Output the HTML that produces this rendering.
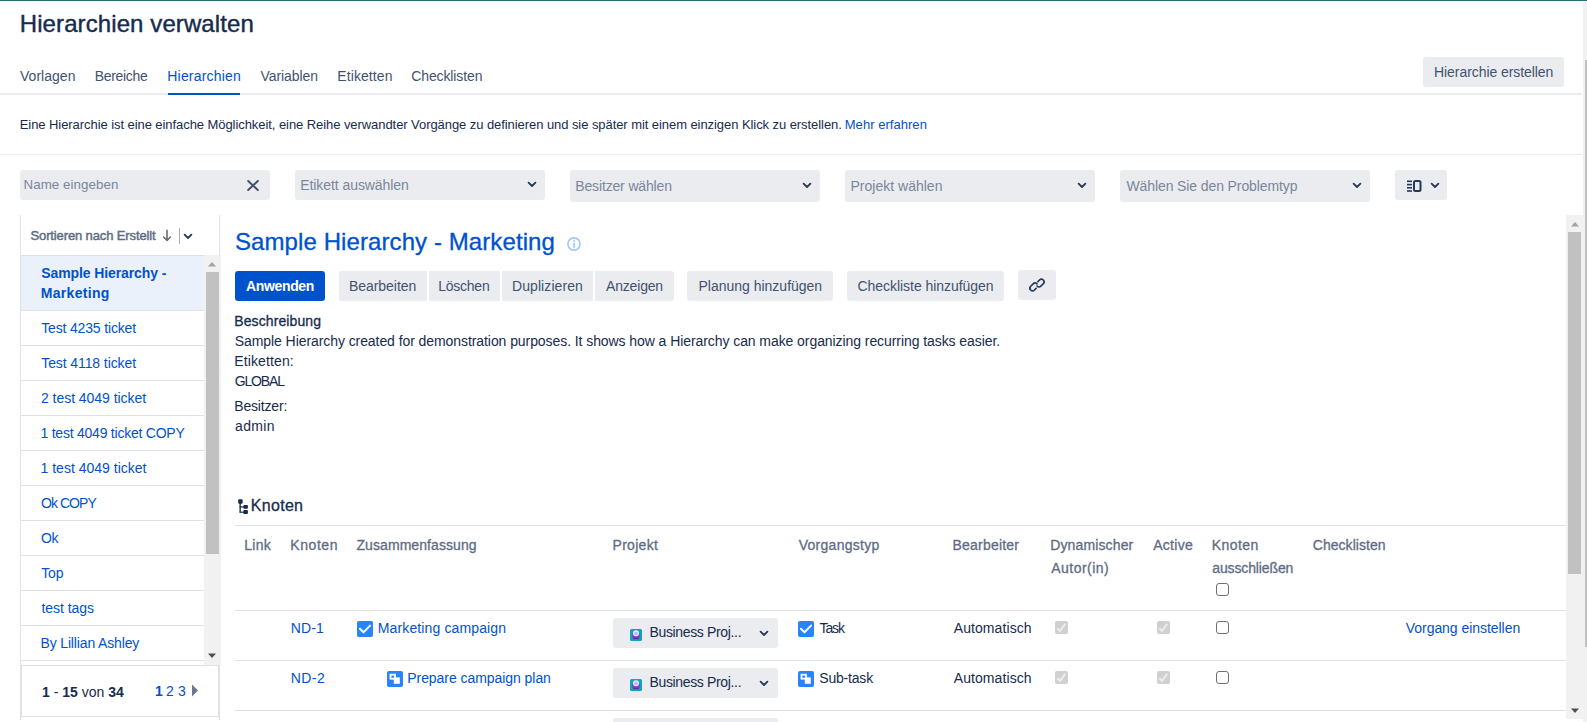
<!DOCTYPE html>
<html><head><meta charset="utf-8"><style>
html,body{margin:0;padding:0;background:#fff;}
body{width:1587px;height:722px;position:relative;overflow:hidden;font-family:"Liberation Sans",sans-serif;}
.t{position:absolute;white-space:nowrap;}
.r{position:absolute;}
svg{display:block;}
</style></head><body>
<div class="r" style="left:0px;top:0px;width:1587px;height:1px;background:#2c6e70;"></div>
<div class="t" id="f1" style="left:19.75px;top:10px;font-size:24px;line-height:27px;color:#172b4d;-webkit-text-stroke:0.4px #172b4d;letter-spacing:0.096px;">Hierarchien verwalten</div>
<div class="t" id="f2" style="left:20.0px;top:68px;font-size:14px;line-height:16px;color:#42526e;letter-spacing:0.027px;">Vorlagen</div>
<div class="t" id="f3" style="left:94.75px;top:68px;font-size:14px;line-height:16px;color:#42526e;letter-spacing:-0.314px;">Bereiche</div>
<div class="t" id="f4" style="left:167.25px;top:68px;font-size:14px;line-height:16px;color:#0052cc;letter-spacing:0.206px;">Hierarchien</div>
<div class="t" id="f5" style="left:260.5px;top:68px;font-size:14px;line-height:16px;color:#42526e;letter-spacing:-0.082px;">Variablen</div>
<div class="t" id="f6" style="left:337.25px;top:68px;font-size:14px;line-height:16px;color:#42526e;letter-spacing:0.097px;">Etiketten</div>
<div class="t" id="f7" style="left:411.25px;top:68px;font-size:14px;line-height:16px;color:#42526e;letter-spacing:-0.115px;">Checklisten</div>
<div class="r" style="left:0px;top:93px;width:1582px;height:2px;background:#ebecf0;"></div>
<div class="r" style="left:168px;top:93px;width:72px;height:2px;background:#0052cc;"></div>
<div class="r" style="left:1423px;top:57px;width:141px;height:30px;background:#ebecf0;border-radius:3px;"></div>
<div class="t" id="f8" style="left:1434.0px;top:64px;font-size:14px;line-height:16px;color:#42526e;letter-spacing:-0.066px;">Hierarchie erstellen</div>
<div class="t" id="f9" style="left:19.75px;top:117px;font-size:13px;line-height:15px;color:#172b4d;letter-spacing:-0.067px;">Eine Hierarchie ist eine einfache Möglichkeit, eine Reihe verwandter Vorgänge zu definieren und sie später mit einem einzigen Klick zu erstellen.</div>
<div class="t" id="f10" style="left:844.75px;top:117px;font-size:13px;line-height:15px;color:#0052cc;letter-spacing:0.038px;">Mehr erfahren</div>
<div class="r" style="left:0px;top:154px;width:1582px;height:1px;background:#ebecf0;"></div>
<div class="r" style="left:20px;top:170px;width:250px;height:30px;background:#ebecf0;border-radius:3px;"></div>
<div class="t" id="f11" style="left:23.5px;top:177px;font-size:13.33px;line-height:15px;color:#7a869a;letter-spacing:0.062px;">Name eingeben</div>
<svg class="r" style="left:247px;top:179.5px" width="12" height="11" viewBox="0 0 12 11"><path d="M1.2 1 L10.8 10 M10.8 1 L1.2 10" stroke="#42526e" stroke-width="2" stroke-linecap="round"/></svg>
<div class="r" style="left:295px;top:170px;width:250px;height:30px;background:#ebecf0;border-radius:3px;"></div>
<div class="t" id="f12" style="left:300.25px;top:177px;font-size:14px;line-height:16px;color:#7a869a;letter-spacing:-0.074px;">Etikett auswählen</div>
<div class="r" style="left:527px;top:181px"><svg width="10" height="7" viewBox="0 0 10 7"><path d="M1.6 1.6 L5 5 L8.4 1.6" fill="none" stroke="#253858" stroke-width="1.8" stroke-linecap="round" stroke-linejoin="round"/></svg></div>
<div class="r" style="left:570px;top:170px;width:250px;height:31.5px;background:#ebecf0;border-radius:3px;"></div>
<div class="t" id="f13" style="left:575.25px;top:178px;font-size:14px;line-height:16px;color:#7a869a;letter-spacing:-0.148px;">Besitzer wählen</div>
<div class="r" style="left:802px;top:182px"><svg width="10" height="7" viewBox="0 0 10 7"><path d="M1.6 1.6 L5 5 L8.4 1.6" fill="none" stroke="#253858" stroke-width="1.8" stroke-linecap="round" stroke-linejoin="round"/></svg></div>
<div class="r" style="left:845px;top:170px;width:250px;height:31.5px;background:#ebecf0;border-radius:3px;"></div>
<div class="t" id="f14" style="left:850.5px;top:178px;font-size:14px;line-height:16px;color:#7a869a;letter-spacing:0.010px;">Projekt wählen</div>
<div class="r" style="left:1077px;top:182px"><svg width="10" height="7" viewBox="0 0 10 7"><path d="M1.6 1.6 L5 5 L8.4 1.6" fill="none" stroke="#253858" stroke-width="1.8" stroke-linecap="round" stroke-linejoin="round"/></svg></div>
<div class="r" style="left:1120px;top:170px;width:250px;height:31.5px;background:#ebecf0;border-radius:3px;"></div>
<div class="t" id="f15" style="left:1126.5px;top:178px;font-size:14px;line-height:16px;color:#7a869a;letter-spacing:-0.108px;">Wählen Sie den Problemtyp</div>
<div class="r" style="left:1352px;top:182px"><svg width="10" height="7" viewBox="0 0 10 7"><path d="M1.6 1.6 L5 5 L8.4 1.6" fill="none" stroke="#253858" stroke-width="1.8" stroke-linecap="round" stroke-linejoin="round"/></svg></div>
<div class="r" style="left:1395px;top:170px;width:52px;height:30px;background:#ebecf0;border-radius:3px;"></div>
<svg class="r" style="left:1407px;top:180px" width="15" height="12" viewBox="0 0 15 12"><g fill="#253858"><rect x="0" y="0.5" width="5" height="1.6"/><rect x="0" y="3.8" width="5" height="1.6"/><rect x="0" y="7" width="5" height="1.6"/><rect x="0" y="10.2" width="5" height="1.6"/></g><rect x="7" y="1" width="6.5" height="10" rx="1.5" fill="none" stroke="#253858" stroke-width="2"/></svg>
<div class="r" style="left:1430px;top:182px"><svg width="10" height="7" viewBox="0 0 10 7"><path d="M1.6 1.6 L5 5 L8.4 1.6" fill="none" stroke="#253858" stroke-width="1.8" stroke-linecap="round" stroke-linejoin="round"/></svg></div>
<div class="r" style="left:20px;top:215px;width:1px;height:505px;background:#dfe1e6;"></div>
<div class="r" style="left:219px;top:215px;width:1px;height:505px;background:#dfe1e6;"></div>
<div class="t" id="f16" style="left:30.5px;top:228px;font-size:13px;line-height:15px;color:#5e6c84;-webkit-text-stroke:0.45px #5e6c84;letter-spacing:-0.124px;">Sortieren nach Erstellt</div>
<svg class="r" style="left:162px;top:229px" width="10" height="13" viewBox="0 0 10 13"><path d="M5 1.3 V11.5 M1.6 8 L5 11.5 L8.4 8" fill="none" stroke="#6e6e6e" stroke-width="1.6" stroke-linecap="round" stroke-linejoin="round"/></svg>
<div class="r" style="left:179px;top:228px;width:1px;height:16px;background:#ababab;"></div>
<div class="r" style="left:183px;top:232.5px"><svg width="10" height="7" viewBox="0 0 10 7"><path d="M1.6 1.6 L5 5 L8.4 1.6" fill="none" stroke="#253858" stroke-width="1.8" stroke-linecap="round" stroke-linejoin="round"/></svg></div>
<div class="r" style="left:20px;top:255px;width:184px;height:1px;background:#dfe1e6;"></div>
<div class="r" style="left:21px;top:256px;width:183px;height:54px;background:#eaf1fb;"></div>
<div class="t" id="f17" style="left:41.25px;top:265px;font-size:14px;line-height:16px;color:#0052cc;font-weight:700;letter-spacing:-0.105px;">Sample Hierarchy -</div>
<div class="t" id="f18" style="left:40.75px;top:285px;font-size:14px;line-height:16px;color:#0052cc;font-weight:700;letter-spacing:0.319px;">Marketing</div>
<div class="r" style="left:21px;top:310px;width:183px;height:1px;background:#dfe1e6;"></div>
<div class="t" id="f19" style="left:41.25px;top:320px;font-size:14px;line-height:16px;color:#0052cc;letter-spacing:-0.164px;">Test 4235 ticket</div>
<div class="r" style="left:21px;top:345px;width:183px;height:1px;background:#dfe1e6;"></div>
<div class="t" id="f20" style="left:41.25px;top:355px;font-size:14px;line-height:16px;color:#0052cc;letter-spacing:-0.096px;">Test 4118 ticket</div>
<div class="r" style="left:21px;top:380px;width:183px;height:1px;background:#dfe1e6;"></div>
<div class="t" id="f21" style="left:41.0px;top:390px;font-size:14px;line-height:16px;color:#0052cc;letter-spacing:-0.043px;">2 test 4049 ticket</div>
<div class="r" style="left:21px;top:415px;width:183px;height:1px;background:#dfe1e6;"></div>
<div class="t" id="f22" style="left:40.5px;top:425px;font-size:14px;line-height:16px;color:#0052cc;letter-spacing:-0.233px;">1 test 4049 ticket COPY</div>
<div class="r" style="left:21px;top:450px;width:183px;height:1px;background:#dfe1e6;"></div>
<div class="t" id="f23" style="left:40.5px;top:460px;font-size:14px;line-height:16px;color:#0052cc;letter-spacing:0.007px;">1 test 4049 ticket</div>
<div class="r" style="left:21px;top:485px;width:183px;height:1px;background:#dfe1e6;"></div>
<div class="t" id="f24" style="left:41.0px;top:495px;font-size:14px;line-height:16px;color:#0052cc;letter-spacing:-0.950px;">Ok COPY</div>
<div class="r" style="left:21px;top:520px;width:183px;height:1px;background:#dfe1e6;"></div>
<div class="t" id="f25" style="left:41.0px;top:530px;font-size:14px;line-height:16px;color:#0052cc;letter-spacing:-0.348px;">Ok</div>
<div class="r" style="left:21px;top:555px;width:183px;height:1px;background:#dfe1e6;"></div>
<div class="t" id="f26" style="left:41.25px;top:565px;font-size:14px;line-height:16px;color:#0052cc;letter-spacing:-0.188px;">Top</div>
<div class="r" style="left:21px;top:590px;width:183px;height:1px;background:#dfe1e6;"></div>
<div class="t" id="f27" style="left:41.5px;top:600px;font-size:14px;line-height:16px;color:#0052cc;letter-spacing:-0.038px;">test tags</div>
<div class="r" style="left:21px;top:625px;width:183px;height:1px;background:#dfe1e6;"></div>
<div class="t" id="f28" style="left:40.5px;top:635px;font-size:14px;line-height:16px;color:#0052cc;letter-spacing:-0.150px;">By Lillian Ashley</div>
<div class="r" style="left:21px;top:660px;width:183px;height:1px;background:#dfe1e6;"></div>
<div class="r" style="left:204px;top:255px;width:17px;height:410px;background:#f1f1f1;"></div>
<div class="r" style="left:206px;top:272px;width:13px;height:282px;background:#c1c1c1;"></div>
<svg class="r" style="left:207px;top:261px" width="10" height="6" viewBox="0 0 10 6"><path d="M1 5.5 L5 1 L9 5.5Z" fill="#a3a3a3"/></svg>
<svg class="r" style="left:207px;top:653px" width="10" height="6" viewBox="0 0 10 6"><path d="M1 0.5 L5 5 L9 0.5Z" fill="#505050"/></svg>
<div class="r" style="left:21px;top:665px;width:198px;height:52px;background:#fff;border:1px solid #dfe1e6;box-sizing:border-box;"></div>
<div class="t" style="left:42px;top:684px;font-size:14px;line-height:16px;color:#172b4d;"><b>1</b> - <b>15</b> von <b>34</b></div>
<div class="t" style="left:155px;top:683px;font-size:14px;line-height:16px;color:#0052cc;"><b>1</b></div>
<div class="t" style="left:166px;top:683px;font-size:14px;line-height:16px;color:#0052cc;">2</div>
<div class="t" style="left:178px;top:683px;font-size:14px;line-height:16px;color:#0052cc;">3</div>
<svg class="r" style="left:191px;top:684px" width="8" height="13" viewBox="0 0 8 13"><path d="M1 0.5 L7 6.5 L1 12.5Z" fill="#6b778c"/></svg>
<div class="t" id="f29" style="left:235.0px;top:228px;font-size:24px;line-height:27px;color:#0052cc;-webkit-text-stroke:0.3px #0052cc;letter-spacing:0.089px;">Sample Hierarchy - Marketing</div>
<svg class="r" style="left:567px;top:237px" width="14" height="14" viewBox="0 0 14 14"><circle cx="7" cy="7" r="6.1" fill="none" stroke="#a0c8fb" stroke-width="1.6"/><rect x="6.2" y="5.9" width="1.7" height="4.8" fill="#a0c8fb"/><rect x="6.2" y="3.2" width="1.7" height="1.7" fill="#a0c8fb"/></svg>
<div class="r" style="left:235px;top:271px;width:90px;height:30px;background:#0052cc;border-radius:3px;"></div>
<div class="t" id="f30" style="left:246.0px;top:278px;font-size:14px;line-height:16px;color:#fff;font-weight:700;letter-spacing:-0.352px;">Anwenden</div>
<div class="r" style="left:339px;top:271px;width:88px;height:30px;background:#ebecf0;border-radius:3px 0 0 3px;"></div>
<div class="t" id="f31" style="left:349.0px;top:278px;font-size:14px;line-height:16px;color:#42526e;letter-spacing:-0.051px;">Bearbeiten</div>
<div class="r" style="left:429px;top:271px;width:71px;height:30px;background:#ebecf0;"></div>
<div class="t" id="f32" style="left:438.25px;top:278px;font-size:14px;line-height:16px;color:#42526e;letter-spacing:-0.247px;">Löschen</div>
<div class="r" style="left:502px;top:271px;width:91px;height:30px;background:#ebecf0;"></div>
<div class="t" id="f33" style="left:512.0px;top:278px;font-size:14px;line-height:16px;color:#42526e;letter-spacing:0.081px;">Duplizieren</div>
<div class="r" style="left:595px;top:271px;width:79px;height:30px;background:#ebecf0;border-radius:0 3px 3px 0;"></div>
<div class="t" id="f34" style="left:606.0px;top:278px;font-size:14px;line-height:16px;color:#42526e;letter-spacing:-0.179px;">Anzeigen</div>
<div class="r" style="left:687px;top:271px;width:146px;height:30px;background:#ebecf0;border-radius:3px;"></div>
<div class="t" id="f35" style="left:698.5px;top:278px;font-size:14px;line-height:16px;color:#42526e;letter-spacing:-0.007px;">Planung hinzufügen</div>
<div class="r" style="left:847px;top:271px;width:157px;height:30px;background:#ebecf0;border-radius:3px;"></div>
<div class="t" id="f36" style="left:857.5px;top:278px;font-size:14px;line-height:16px;color:#42526e;letter-spacing:-0.043px;">Checkliste hinzufügen</div>
<div class="r" style="left:1018px;top:270px;width:38px;height:30px;background:#ebecf0;border-radius:3px;"></div>
<svg class="r" style="left:1025px;top:273px" width="24" height="24" viewBox="0 0 24 24"><g transform="rotate(-45 12 12)" fill="none" stroke="#253858" stroke-width="1.7" stroke-linecap="round"><path d="M9 13.75 H6.65 A2.65 2.65 0 0 1 6.65 8.45 H10.15 A2.65 2.65 0 0 1 12.8 11.1"/><path d="M15 10.25 H17.35 A2.65 2.65 0 0 1 17.35 15.55 H13.85 A2.65 2.65 0 0 1 11.2 12.9"/></g></svg>
<div class="t" id="f37" style="left:234.25px;top:313px;font-size:14px;line-height:16px;color:#172b4d;-webkit-text-stroke:0.3px #172b4d;letter-spacing:0.102px;">Beschreibung</div>
<div class="t" id="f38" style="left:234.75px;top:333px;font-size:14px;line-height:16px;color:#172b4d;letter-spacing:-0.074px;">Sample Hierarchy created for demonstration purposes. It shows how a Hierarchy can make organizing recurring tasks easier.</div>
<div class="t" id="f39" style="left:234.25px;top:353px;font-size:14px;line-height:16px;color:#172b4d;letter-spacing:0.117px;">Etiketten:</div>
<div class="t" id="f40" style="left:234.75px;top:373px;font-size:14px;line-height:16px;color:#172b4d;letter-spacing:-1.152px;">GLOBAL</div>
<div class="t" id="f41" style="left:234.25px;top:398px;font-size:14px;line-height:16px;color:#172b4d;letter-spacing:-0.168px;">Besitzer:</div>
<div class="t" id="f42" style="left:235.0px;top:418px;font-size:14px;line-height:16px;color:#172b4d;letter-spacing:0.366px;">admin</div>
<svg class="r" style="left:238px;top:499px" width="10" height="15" viewBox="0 0 10 15"><g fill="#172b4d"><rect x="0.2" y="0.3" width="4.4" height="4.5" rx="1"/><rect x="1.5" y="4" width="1.3" height="9.3"/><rect x="1.5" y="7.3" width="4.5" height="1.2"/><rect x="1.5" y="12.6" width="4.5" height="1.2"/><rect x="5.4" y="6.1" width="4.5" height="3.6" rx="0.8"/><rect x="5.4" y="11.1" width="4.5" height="3.9" rx="0.8"/></g></svg>
<div class="t" id="f43" style="left:250.75px;top:497px;font-size:16px;line-height:17px;color:#172b4d;-webkit-text-stroke:0.3px #172b4d;letter-spacing:0.307px;">Knoten</div>
<div class="r" style="left:235px;top:525px;width:1331px;height:1px;background:#dfe1e6;"></div>
<div class="t" id="f44" style="left:244.25px;top:537px;font-size:14px;line-height:16px;color:#5e6c84;-webkit-text-stroke:0.3px #5e6c84;letter-spacing:0.313px;">Link</div>
<div class="t" id="f45" style="left:290.25px;top:537px;font-size:14px;line-height:16px;color:#5e6c84;-webkit-text-stroke:0.3px #5e6c84;letter-spacing:0.577px;">Knoten</div>
<div class="t" id="f46" style="left:356.5px;top:537px;font-size:14px;line-height:16px;color:#5e6c84;-webkit-text-stroke:0.3px #5e6c84;letter-spacing:0.070px;">Zusammenfassung</div>
<div class="t" id="f47" style="left:612.5px;top:537px;font-size:14px;line-height:16px;color:#5e6c84;-webkit-text-stroke:0.3px #5e6c84;letter-spacing:0.295px;">Projekt</div>
<div class="t" id="f48" style="left:798.75px;top:537px;font-size:14px;line-height:16px;color:#5e6c84;-webkit-text-stroke:0.3px #5e6c84;letter-spacing:0.261px;">Vorgangstyp</div>
<div class="t" id="f49" style="left:952.5px;top:537px;font-size:14px;line-height:16px;color:#5e6c84;-webkit-text-stroke:0.3px #5e6c84;letter-spacing:0.210px;">Bearbeiter</div>
<div class="t" id="f50" style="left:1050.25px;top:537px;font-size:14px;line-height:16px;color:#5e6c84;-webkit-text-stroke:0.3px #5e6c84;letter-spacing:0.128px;">Dynamischer</div>
<div class="t" id="f51" style="left:1153.25px;top:537px;font-size:14px;line-height:16px;color:#5e6c84;-webkit-text-stroke:0.3px #5e6c84;letter-spacing:0.265px;">Active</div>
<div class="t" id="f52" style="left:1211.75px;top:537px;font-size:14px;line-height:16px;color:#5e6c84;-webkit-text-stroke:0.3px #5e6c84;letter-spacing:0.437px;">Knoten</div>
<div class="t" id="f53" style="left:1312.75px;top:537px;font-size:14px;line-height:16px;color:#5e6c84;-webkit-text-stroke:0.3px #5e6c84;letter-spacing:0.045px;">Checklisten</div>
<div class="t" id="f54" style="left:1051.25px;top:560px;font-size:14px;line-height:16px;color:#5e6c84;-webkit-text-stroke:0.3px #5e6c84;letter-spacing:0.476px;">Autor(in)</div>
<div class="t" id="f55" style="left:1212.25px;top:560px;font-size:14px;line-height:16px;color:#5e6c84;-webkit-text-stroke:0.3px #5e6c84;letter-spacing:-0.127px;">ausschließen</div>
<svg class="r" style="left:1216px;top:583px" width="13" height="13" viewBox="0 0 13 13"><rect x="0.5" y="0.5" width="12" height="12" rx="2.5" fill="#fff" stroke="#707070" stroke-width="1"/></svg>
<div class="r" style="left:235px;top:610px;width:1331px;height:1px;background:#dfe1e6;"></div>
<div class="r" style="left:235px;top:660px;width:1331px;height:1px;background:#dfe1e6;"></div>
<div class="r" style="left:235px;top:710px;width:1331px;height:1px;background:#dfe1e6;"></div>
<div class="t" id="f56" style="left:290.75px;top:620px;font-size:14px;line-height:16px;color:#0052cc;letter-spacing:0.120px;">ND-1</div>
<div class="r" style="left:357px;top:621px;width:16px;height:16px"><svg width="16" height="16" viewBox="0 0 16 16"><rect width="16" height="16" rx="2" fill="#2684ff"/><path d="M2.9 7.7 L6.5 11.2 L13.1 4.6" fill="none" stroke="#fff" stroke-width="2" stroke-linecap="round" stroke-linejoin="round"/></svg></div>
<div class="t" id="f57" style="left:377.75px;top:620px;font-size:14px;line-height:16px;color:#0052cc;letter-spacing:0.129px;">Marketing campaign</div>
<div class="r" style="left:613px;top:618px;width:165px;height:30px;background:#ebecf0;border-radius:3px;"></div>
<div class="r" style="left:630px;top:629px;width:12px;height:12px"><svg width="12" height="12" viewBox="0 0 12 12"><rect width="12" height="12" rx="1.5" fill="#0da5ba"/><path d="M1.8 7 C1.8 4.6 3.5 3.6 6 3.6 C8.5 3.6 10.2 4.6 10.2 7 C10.2 9 8.8 10 6 10 C3.2 10 1.8 9 1.8 7Z" fill="#8a3fc7"/><rect x="3.3" y="8.6" width="5.6" height="1.5" fill="#5b2ca0"/><circle cx="6" cy="4.3" r="3" fill="#f4f1ff"/><circle cx="6" cy="4.4" r="1.9" fill="#a9c4f5"/><circle cx="6" cy="4.4" r="0.6" fill="#d9a7c8"/></svg></div>
<div class="t" id="f58" style="left:649.5px;top:624px;font-size:14px;line-height:16px;color:#172b4d;letter-spacing:-0.349px;">Business Proj...</div>
<div class="r" style="left:759px;top:630px"><svg width="10" height="7" viewBox="0 0 10 7"><path d="M1.6 1.6 L5 5 L8.4 1.6" fill="none" stroke="#253858" stroke-width="1.8" stroke-linecap="round" stroke-linejoin="round"/></svg></div>
<div class="r" style="left:798px;top:621px;width:16px;height:16px"><svg width="16" height="16" viewBox="0 0 16 16"><rect width="16" height="16" rx="2" fill="#2684ff"/><path d="M2.9 7.7 L6.5 11.2 L13.1 4.6" fill="none" stroke="#fff" stroke-width="2" stroke-linecap="round" stroke-linejoin="round"/></svg></div>
<div class="t" id="f59" style="left:819.5px;top:620px;font-size:14px;line-height:16px;color:#172b4d;letter-spacing:-1.101px;">Task</div>
<div class="t" id="f60" style="left:953.75px;top:620px;font-size:14px;line-height:16px;color:#172b4d;letter-spacing:0.079px;">Automatisch</div>
<svg class="r" style="left:1055px;top:621px" width="13" height="13" viewBox="0 0 13 13"><rect x="0" y="0" width="13" height="13" rx="2" fill="#d0d0d0"/><path d="M2.3 7.2 L5 9.9 L10.2 2.9" fill="none" stroke="#ededed" stroke-width="2"/></svg>
<svg class="r" style="left:1157px;top:621px" width="13" height="13" viewBox="0 0 13 13"><rect x="0" y="0" width="13" height="13" rx="2" fill="#d0d0d0"/><path d="M2.3 7.2 L5 9.9 L10.2 2.9" fill="none" stroke="#ededed" stroke-width="2"/></svg>
<svg class="r" style="left:1216px;top:621px" width="13" height="13" viewBox="0 0 13 13"><rect x="0.5" y="0.5" width="12" height="12" rx="2.5" fill="#fff" stroke="#707070" stroke-width="1"/></svg>
<div class="t" id="f61" style="left:290.75px;top:670px;font-size:14px;line-height:16px;color:#0052cc;letter-spacing:0.427px;">ND-2</div>
<div class="r" style="left:387px;top:671px;width:16px;height:16px"><svg width="16" height="16" viewBox="0 0 16 16"><rect width="16" height="16" rx="2" fill="#2684ff"/><rect x="3.5" y="3.7" width="4.5" height="4" fill="none" stroke="#fff" stroke-width="1.8"/><rect x="6.8" y="6.4" width="6" height="6.4" fill="#fff"/></svg></div>
<div class="t" id="f62" style="left:407.25px;top:670px;font-size:14px;line-height:16px;color:#0052cc;letter-spacing:-0.055px;">Prepare campaign plan</div>
<div class="r" style="left:613px;top:668px;width:165px;height:30px;background:#ebecf0;border-radius:3px;"></div>
<div class="r" style="left:630px;top:679px;width:12px;height:12px"><svg width="12" height="12" viewBox="0 0 12 12"><rect width="12" height="12" rx="1.5" fill="#0da5ba"/><path d="M1.8 7 C1.8 4.6 3.5 3.6 6 3.6 C8.5 3.6 10.2 4.6 10.2 7 C10.2 9 8.8 10 6 10 C3.2 10 1.8 9 1.8 7Z" fill="#8a3fc7"/><rect x="3.3" y="8.6" width="5.6" height="1.5" fill="#5b2ca0"/><circle cx="6" cy="4.3" r="3" fill="#f4f1ff"/><circle cx="6" cy="4.4" r="1.9" fill="#a9c4f5"/><circle cx="6" cy="4.4" r="0.6" fill="#d9a7c8"/></svg></div>
<div class="t" id="f63" style="left:649.5px;top:674px;font-size:14px;line-height:16px;color:#172b4d;letter-spacing:-0.349px;">Business Proj...</div>
<div class="r" style="left:759px;top:680px"><svg width="10" height="7" viewBox="0 0 10 7"><path d="M1.6 1.6 L5 5 L8.4 1.6" fill="none" stroke="#253858" stroke-width="1.8" stroke-linecap="round" stroke-linejoin="round"/></svg></div>
<div class="r" style="left:798px;top:671px;width:16px;height:16px"><svg width="16" height="16" viewBox="0 0 16 16"><rect width="16" height="16" rx="2" fill="#2684ff"/><rect x="3.5" y="3.7" width="4.5" height="4" fill="none" stroke="#fff" stroke-width="1.8"/><rect x="6.8" y="6.4" width="6" height="6.4" fill="#fff"/></svg></div>
<div class="t" id="f64" style="left:819.25px;top:670px;font-size:14px;line-height:16px;color:#172b4d;letter-spacing:-0.191px;">Sub-task</div>
<div class="t" id="f65" style="left:953.75px;top:670px;font-size:14px;line-height:16px;color:#172b4d;letter-spacing:0.079px;">Automatisch</div>
<svg class="r" style="left:1055px;top:671px" width="13" height="13" viewBox="0 0 13 13"><rect x="0" y="0" width="13" height="13" rx="2" fill="#d0d0d0"/><path d="M2.3 7.2 L5 9.9 L10.2 2.9" fill="none" stroke="#ededed" stroke-width="2"/></svg>
<svg class="r" style="left:1157px;top:671px" width="13" height="13" viewBox="0 0 13 13"><rect x="0" y="0" width="13" height="13" rx="2" fill="#d0d0d0"/><path d="M2.3 7.2 L5 9.9 L10.2 2.9" fill="none" stroke="#ededed" stroke-width="2"/></svg>
<svg class="r" style="left:1216px;top:671px" width="13" height="13" viewBox="0 0 13 13"><rect x="0.5" y="0.5" width="12" height="12" rx="2.5" fill="#fff" stroke="#707070" stroke-width="1"/></svg>
<div class="t" id="f66" style="left:1405.75px;top:620px;font-size:14px;line-height:16px;color:#0052cc;letter-spacing:-0.043px;">Vorgang einstellen</div>
<div class="r" style="left:613px;top:718px;width:165px;height:10px;background:#ebecf0;border-radius:3px;"></div>
<div class="r" style="left:1566px;top:215px;width:17px;height:504px;background:#f1f1f1;"></div>
<div class="r" style="left:1568px;top:232px;width:13px;height:342px;background:#c1c1c1;"></div>
<svg class="r" style="left:1570px;top:221px" width="10" height="6" viewBox="0 0 10 6"><path d="M1 5.5 L5 1 L9 5.5Z" fill="#a3a3a3"/></svg>
<svg class="r" style="left:1570px;top:708px" width="10" height="6" viewBox="0 0 10 6"><path d="M1 0.5 L5 5 L9 0.5Z" fill="#505050"/></svg>
<div class="r" style="left:1583px;top:2px;width:4px;height:720px;background:#f1f1f1;"></div>
<div class="r" style="left:1585px;top:60px;width:2px;height:587px;background:#c1c1c1;"></div>
</body></html>
